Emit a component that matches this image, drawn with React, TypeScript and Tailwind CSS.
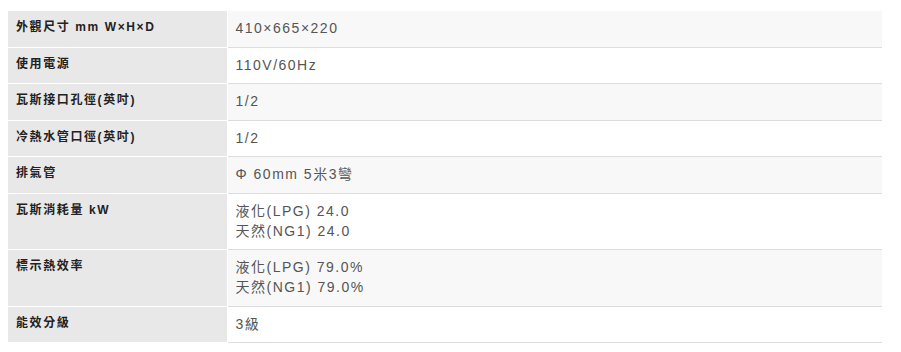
import React from 'react';

const specs: { label: string; values: string[] }[] = [
  { label: '外觀尺寸 mm W×H×D', values: ['410×665×220'] },
  { label: '使用電源', values: ['110V/60Hz'] },
  { label: '瓦斯接口孔徑(英吋)', values: ['1/2'] },
  { label: '冷熱水管口徑(英吋)', values: ['1/2'] },
  { label: '排氣管', values: ['Φ 60mm 5米3彎'] },
  { label: '瓦斯消耗量 kW', values: ['液化(LPG) 24.0', '天然(NG1) 24.0'] },
  { label: '標示熱效率', values: ['液化(LPG) 79.0%', '天然(NG1) 79.0%'] },
  { label: '能效分級', values: ['3級'] },
];

const App: React.FC = () => {
  return (
    <div className="w-[901px] h-[352px] bg-white pt-[11px] pl-2 font-['Liberation_Sans','Noto_Sans_CJK_TC',sans-serif]">
      <table className="w-[874px] border-collapse table-fixed">
        <colgroup>
          <col className="w-[219px]" />
          <col />
        </colgroup>
        <tbody>
          {specs.map((row, i) => (
            <tr key={row.label}>
              <th className="bg-[#e8e8e8] border-b border-r border-white text-left align-top pl-2 pt-[6px] pb-[8.5px] text-[12px] leading-[20px] font-bold tracking-[1.6px] text-[#222]">
                {row.label}
              </th>
              <td
                className={
                  i % 2 === 0
                    ? 'bg-[#f8f8f8] border-b border-[#dddddd] align-top pl-2 pt-[7px] pb-[8.5px] text-[14px] leading-[20px] tracking-[1.5px] text-[#555]'
                    : 'bg-white border-b border-[#dddddd] align-top pl-2 pt-[7px] pb-[8.5px] text-[14px] leading-[20px] tracking-[1.5px] text-[#555]'
                }
              >
                {row.values.map((v) => (
                  <div key={v}>{v}</div>
                ))}
              </td>
            </tr>
          ))}
        </tbody>
      </table>
    </div>
  );
};

export default App;
